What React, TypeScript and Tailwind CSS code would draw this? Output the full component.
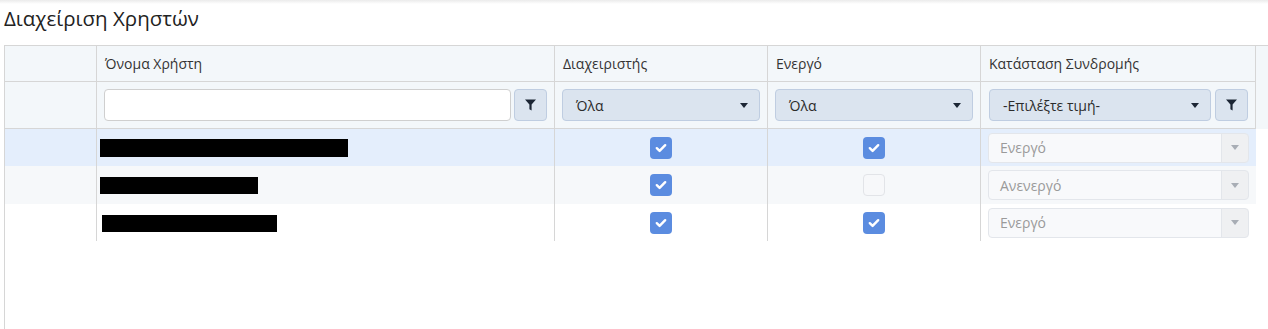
import React from 'react';

const FONT = { fontFamily: '"Open Sans", "Noto Sans", sans-serif' };

function FilterIcon() {
  return (
    <svg width="11" height="12" viewBox="0 0 11 12" className="block">
      <path d="M0 0.5h11L6.6 5.6V11.5L4.4 10.3V5.6z" fill="#1c2635" />
    </svg>
  );
}

function Caret({ color = '#1c2635' }: { color?: string }) {
  return (
    <svg width="8" height="5" viewBox="0 0 8 5" className="block">
      <path d="M0 0h8L4 5z" fill={color} />
    </svg>
  );
}

function Check({ checked }: { checked: boolean }) {
  if (!checked) {
    return <div className="w-[22px] h-[22px] rounded-[4px] border border-[#e2e4e8] bg-[#f7f8fa]" />;
  }
  return (
    <div className="w-[22px] h-[22px] rounded-[4px] bg-[#5b8ce0] flex items-center justify-center">
      <svg width="12" height="10" viewBox="0 0 12 10">
        <path d="M1.8 5.2l2.8 2.7L10.2 2.2" stroke="#fff" strokeWidth="2.4" fill="none" strokeLinecap="round" strokeLinejoin="round" />
      </svg>
    </div>
  );
}

function FilterSelect({ label, width }: { label: string; width: string }) {
  return (
    <div className={`${width} h-[32px] rounded-[4px] border border-[#bfcde1] bg-[#dbe4ef] flex items-center justify-between pl-[13px] pr-[11px] text-[14px] text-[#2b2b2b]`}>
      <span>{label}</span>
      <Caret />
    </div>
  );
}

function FilterButton() {
  return (
    <div className="w-[33px] h-[32px] rounded-[4px] border border-[#bfcde1] bg-[#dbe4ef] flex items-center justify-center">
      <FilterIcon />
    </div>
  );
}

function StatusSelect({ label }: { label: string }) {
  return (
    <div className="w-[261px] h-[30px] rounded-[4px] border border-[#e3e6eb] bg-[#f8f9fb] flex overflow-hidden text-[14px]">
      <span className="flex-1 flex items-center pl-[11px] text-[#9a9a9a]">{label}</span>
      <span className="w-[27px] border-l border-[#e3e6eb] bg-black/[0.035] flex items-center justify-center">
        <Caret color="#a8adb5" />
      </span>
    </div>
  );
}

const users = [
  { bar: 'w-[248px] h-[18px] mt-[1px]', ml: 'ml-[3px]', admin: true, active: true, status: 'Ενεργό', bg: 'bg-[#e4eefc]' },
  { bar: 'w-[158px] h-[17px] mt-[1px]', ml: 'ml-[3px]', admin: true, active: false, status: 'Ανενεργό', bg: 'bg-[#f6f8fa]' },
  { bar: 'w-[175px] h-[17px] mt-[1px]', ml: 'ml-[5px]', admin: true, active: true, status: 'Ενεργό', bg: 'bg-white' },
];

const heights = ['h-[37px]', 'h-[38px]', 'h-[37px]'];

export default function App() {
  return (
    <div className="w-[1268px] h-[329px] bg-white overflow-hidden text-[#333]" style={FONT}>
      <div className="h-[4px] bg-gradient-to-b from-[#ebebeb] to-white" />
      <h1 className="pl-[4px] pt-[1px] h-[41px] text-[20.5px] leading-[27px] text-[#222]">Διαχείριση Χρηστών</h1>
      <div className="ml-[4px] h-[284px] border-l border-t border-[#d6d6d6]">
        <div className="flex bg-[#f3f7fa]">
          <div>
            <div className="grid grid-cols-[92px_458px_213px_213px_275px] h-[36px] text-[14px]">
              <div className="border-r border-b border-[#d6d6d6]" />
              <div className="border-r border-b border-[#d6d6d6] flex items-center pl-[8px]">Όνομα Χρήστη</div>
              <div className="border-r border-b border-[#d6d6d6] flex items-center pl-[8px]">Διαχειριστής</div>
              <div className="border-r border-b border-[#d6d6d6] flex items-center pl-[8px]">Ενεργό</div>
              <div className="border-r border-b border-[#d6d6d6] flex items-center pl-[8px]">Κατάσταση Συνδρομής</div>
            </div>
            <div className="grid grid-cols-[92px_458px_213px_213px_275px] h-[47px]">
              <div className="border-r border-b border-[#d6d6d6]" />
              <div className="border-r border-b border-[#d6d6d6] flex items-center pl-[7px] gap-[3px]">
                <div className="w-[407px] h-[32px] rounded-[4px] border border-[#cfcfcf] bg-white" />
                <FilterButton />
              </div>
              <div className="border-r border-b border-[#d6d6d6] flex items-center pl-[7px]">
                <FilterSelect label="Όλα" width="w-[198px]" />
              </div>
              <div className="border-r border-b border-[#d6d6d6] flex items-center pl-[7px]">
                <FilterSelect label="Όλα" width="w-[198px]" />
              </div>
              <div className="border-r border-b border-[#d6d6d6] flex items-center pl-[8px] gap-[4px]">
                <FilterSelect label="-Επιλέξτε τιμή-" width="w-[222px]" />
                <FilterButton />
              </div>
            </div>
          </div>
          <div className="flex-1" />
        </div>
        {users.map((u, i) => (
          <div key={i} className={`grid grid-cols-[92px_458px_213px_213px_275px] w-[1251px] ${heights[i]} ${u.bg}`}>
            <div className="border-r border-[#d6d6d6]" />
            <div className="border-r border-[#d6d6d6] flex items-center">
              <div className={`${u.bar} ${u.ml} bg-black`} />
            </div>
            <div className="border-r border-[#d6d6d6] flex items-center justify-center">
              <Check checked={u.admin} />
            </div>
            <div className="border-r border-[#d6d6d6] flex items-center justify-center">
              <Check checked={u.active} />
            </div>
            <div className="flex items-center pl-[7px]">
              <StatusSelect label={u.status} />
            </div>
          </div>
        ))}
      </div>
    </div>
  );
}
